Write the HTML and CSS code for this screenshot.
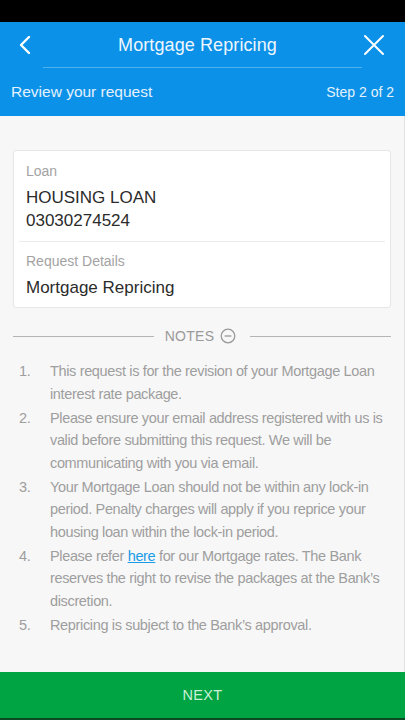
FILE: index.html
```html
<!DOCTYPE html>
<html>
<head>
<meta charset="utf-8">
<link rel="stylesheet" href="styles.css">
</head>
<body>
<div class="screen">
  <div class="status"></div>
  <header class="header">
    <div class="nav">
      <svg class="icon back" width="14" height="20" viewBox="0 0 14 20"><path d="M11 2 L3 10 L11 18" fill="none" stroke="#fff" stroke-width="2.4" stroke-linecap="round" stroke-linejoin="round"/></svg>
      <div class="title">Mortgage Repricing</div>
      <svg class="icon close" width="22" height="22" viewBox="0 0 22 22"><path d="M2 2 L20 20 M20 2 L2 20" fill="none" stroke="#fff" stroke-width="2" stroke-linecap="round"/></svg>
    </div>
    <div class="navline"></div>
    <div class="sub">
      <span>Review your request</span>
      <span class="step">Step 2 of 2</span>
    </div>
  </header>
  <main class="content">
    <section class="card">
      <div class="field">
        <div class="label">Loan</div>
        <div class="value">HOUSING LOAN<br>03030274524</div>
      </div>
      <div class="field last">
        <div class="label">Request Details</div>
        <div class="value">Mortgage Repricing</div>
      </div>
    </section>
    <div class="notes-head">
      <span class="rule"></span>
      <span class="notes-label">NOTES</span>
      <svg class="minus" width="16" height="16" viewBox="0 0 16 16"><circle cx="8" cy="8" r="6.8" fill="none" stroke="#9a9a9a" stroke-width="1.3"/><path d="M4.6 8 H11.4" stroke="#9a9a9a" stroke-width="1.3"/></svg>
      <span class="rule"></span>
    </div>
    <ol class="notes">
      <li><span class="num">1.</span><span class="txt">This request is for the revision of your Mortgage Loan interest rate package.</span></li>
      <li><span class="num">2.</span><span class="txt">Please ensure your email address registered with us is valid before submitting this request. We will be communicating with you via email.</span></li>
      <li><span class="num">3.</span><span class="txt">Your Mortgage Loan should not be within any lock-in period. Penalty charges will apply if you reprice your housing loan within the lock-in period.</span></li>
      <li><span class="num">4.</span><span class="txt">Please refer <a class="link" href="#">here</a> for our Mortgage rates. The Bank reserves the right to revise the packages at the Bank’s discretion.</span></li>
      <li><span class="num">5.</span><span class="txt">Repricing is subject to the Bank’s approval.</span></li>
    </ol>
  </main>
  <button class="next">NEXT</button>
</div>
</body>
</html>
```
FILE: styles.css
```css
* { box-sizing: border-box; }
html, body { margin: 0; padding: 0; }
body {
  font-family: "Liberation Sans", Arial, sans-serif;
  background: #000;
}
.screen {
  width: 405px;
  height: 720px;
  display: flex;
  flex-direction: column;
  background: #f7f7f7;
  overflow: hidden;
}
.status { height: 22px; background: #000; flex: none; }
.header {
  background: #0b91e8;
  color: #fff;
  height: 94px;
  flex: none;
  display: flex;
  flex-direction: column;
}
.nav {
  height: 45px;
  display: flex;
  align-items: center;
  justify-content: space-between;
  padding: 0 20px 0 18px;
}
.title {
  font-size: 18px;
  color: #eef6fd;
  letter-spacing: 0.1px;
  padding-top: 1px;
}
.icon { display: block; }
.back { margin-top: 1px; }
.navline {
  height: 1px;
  background: #4fb0ee;
  margin: 0 43px 0 43px;
}
.sub {
  flex: 1;
  display: flex;
  align-items: center;
  justify-content: space-between;
  padding: 0 11px 0 11px;
  font-size: 15.5px;
  color: #e4f1fc;
}
.step { font-size: 14px; }
.content {
  flex: 1;
  padding: 34px 13px 0 13px;
  border-right: 1px solid #e2e2e2;
}
.card {
  background: #fff;
  border: 1px solid #e6e6e6;
  border-radius: 3px;
  padding: 0 5px;
}
.field {
  padding: 10px 7px 9px 7px;
  border-bottom: 1px solid #ececec;
}
.field.last { border-bottom: none; padding-top: 9px; padding-bottom: 8px; }
.label {
  font-size: 14px;
  color: #a3a3a3;
  line-height: 20px;
}
.value {
  font-size: 17px;
  color: #2b2b2b;
  line-height: 23px;
  margin-top: 5px;
}
.notes-head {
  display: flex;
  align-items: center;
  margin-top: 18px;
  height: 20px;
}
.rule { flex: 1; height: 1px; background: #b5b5b5; }
.notes-label {
  font-size: 14px;
  color: #9a9a9a;
  margin: 0 6px 0 11px;
  letter-spacing: 0.3px;
}
.minus { margin-right: 14px; flex: none; }
.notes {
  list-style: none;
  margin: 14px 0 0 0;
  padding: 0;
  font-size: 14.5px;
  line-height: 22.5px;
  color: #9e9e9e;
  letter-spacing: -0.35px;
}
.notes li { display: flex; margin-bottom: 1.5px; }
.num { width: 37px; flex: none; padding-left: 6px; }
.txt { flex: 1; }
.link { color: #1a9be6; text-decoration: underline; }
.next {
  flex: none;
  height: 48px;
  border: none;
  border-bottom: 2px solid #0b4a22;
  background: #00a443;
  color: #c9f0d5;
  font-family: "Liberation Sans", Arial, sans-serif;
  font-size: 14.5px;
  letter-spacing: 0.3px;
  width: 100%;
  padding: 0;
}
```
